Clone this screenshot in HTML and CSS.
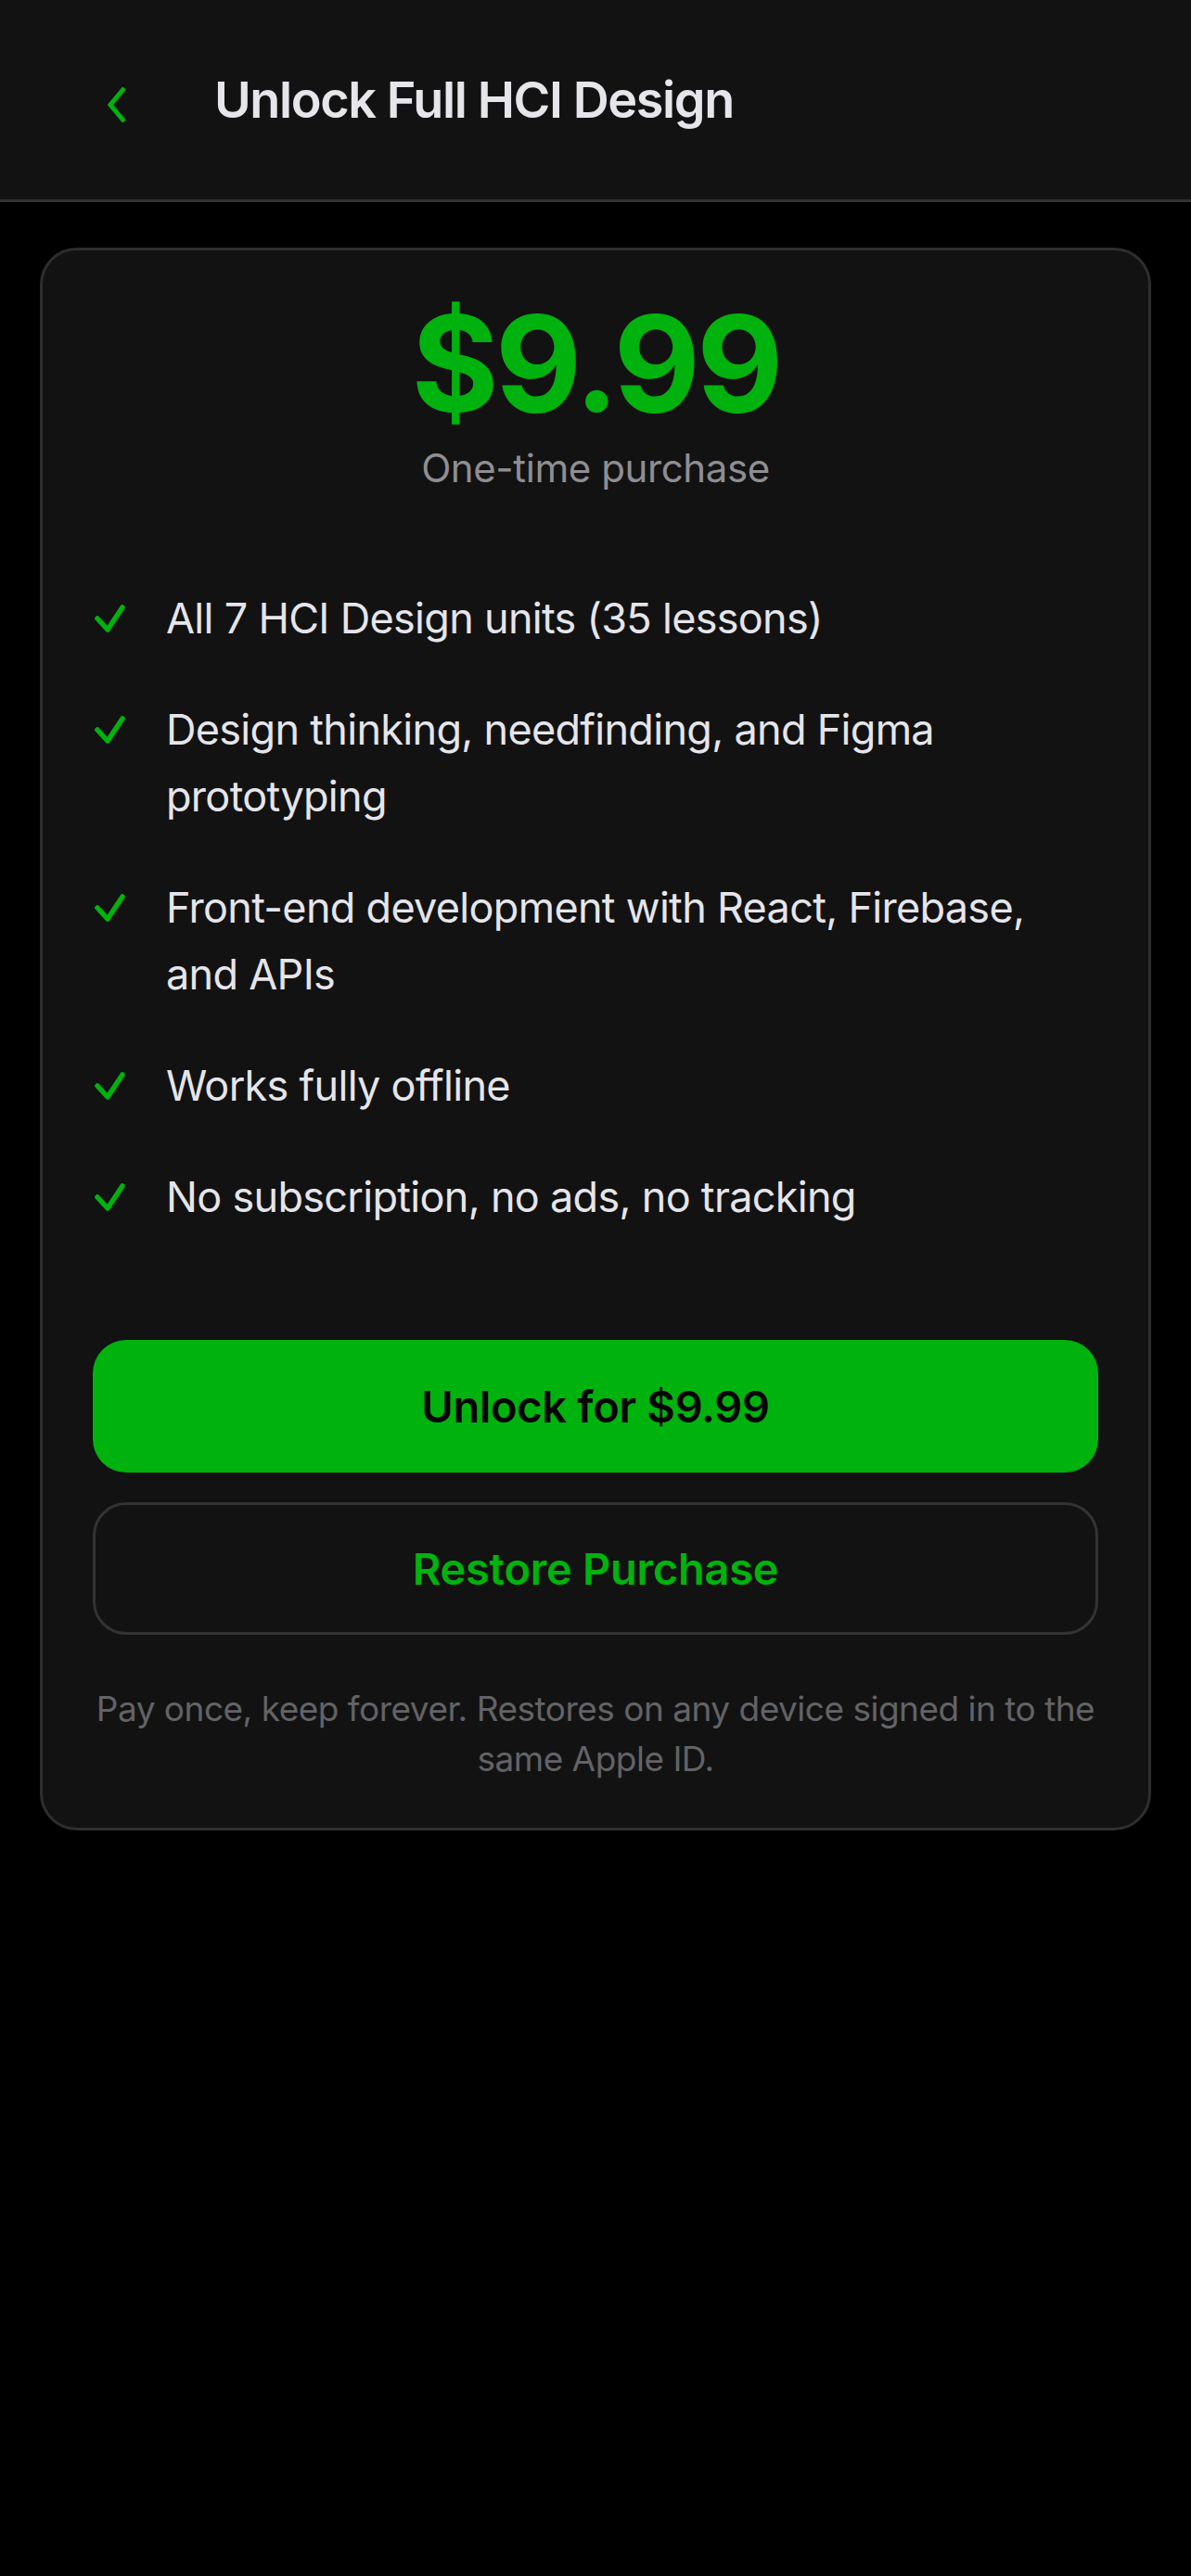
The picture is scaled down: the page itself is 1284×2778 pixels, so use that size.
FILE: index.html
```html
<!DOCTYPE html>
<html lang="en">
<head>
    <meta charset="UTF-8">
    <meta name="viewport" content="width=device-width, initial-scale=1.0">
    <title>Unlock Full HCI Design</title>
    <link rel="stylesheet" href="styles.css">
</head>
<body>
    <header class="top-bar">
        <button class="back-btn" aria-label="Back">
            <svg width="22" height="42" viewBox="0 0 22 42">
                <polyline points="19,3 4,21 19,39" fill="none" stroke="#00b20d" stroke-width="5"/>
            </svg>
        </button>
        <h1 class="top-title">Unlock Full HCI Design</h1>
    </header>

    <main class="page">
        <section class="card">
            <div class="price">$9.99</div>
            <p class="price-note">One-time purchase</p>

            <ul class="features">
                <li>
                    <svg class="check" width="35" height="32" viewBox="0 0 35 32"><polyline points="4,16 15,28 31,4" fill="none" stroke="#00b20d" stroke-width="5.5" stroke-linecap="round" stroke-linejoin="round"/></svg>
                    <span>All 7 HCI Design units (35 lessons)</span>
                </li>
                <li>
                    <svg class="check" width="35" height="32" viewBox="0 0 35 32"><polyline points="4,16 15,28 31,4" fill="none" stroke="#00b20d" stroke-width="5.5" stroke-linecap="round" stroke-linejoin="round"/></svg>
                    <span>Design thinking, needfinding, and Figma prototyping</span>
                </li>
                <li>
                    <svg class="check" width="35" height="32" viewBox="0 0 35 32"><polyline points="4,16 15,28 31,4" fill="none" stroke="#00b20d" stroke-width="5.5" stroke-linecap="round" stroke-linejoin="round"/></svg>
                    <span>Front-end development with React, Firebase, and APIs</span>
                </li>
                <li>
                    <svg class="check" width="35" height="32" viewBox="0 0 35 32"><polyline points="4,16 15,28 31,4" fill="none" stroke="#00b20d" stroke-width="5.5" stroke-linecap="round" stroke-linejoin="round"/></svg>
                    <span>Works fully offline</span>
                </li>
                <li>
                    <svg class="check" width="35" height="32" viewBox="0 0 35 32"><polyline points="4,16 15,28 31,4" fill="none" stroke="#00b20d" stroke-width="5.5" stroke-linecap="round" stroke-linejoin="round"/></svg>
                    <span>No subscription, no ads, no tracking</span>
                </li>
            </ul>

            <button class="btn btn-unlock">Unlock for $9.99</button>
            <button class="btn btn-restore">Restore Purchase</button>

            <p class="fine-print">Pay once, keep forever. Restores on any device signed in to the same Apple ID.</p>
        </section>
    </main>
</body>
</html>
```

FILE: styles.css
```css
* {
    box-sizing: border-box;
}

body {
    margin: 0;
    padding: 0;
    background-color: #000;
    font-family: 'Inter', 'Noto Sans', sans-serif;
    color: #e5e5ea;
}

.top-bar {
    height: 218px;
    display: flex;
    align-items: center;
    padding-left: 115px;
    background-color: #121212;
    border-bottom: 3px solid #333;
}

.back-btn {
    width: 116px;
    padding: 10px 0 0 0;
    border: none;
    background: none;
    display: flex;
    cursor: pointer;
}

.top-title {
    margin: 0;
    font-size: 54px;
    font-weight: 600;
    letter-spacing: -1.4px;
    color: #e5e5ea;
}

.page {
    padding: 49px 43px;
}

.card {
    background-color: #121212;
    border: 3px solid #2e2e2e;
    border-radius: 40px;
    padding: 50px 54px 47px;
}

.price {
    text-align: center;
    font-size: 144px;
    font-weight: 700;
    line-height: 1;
    letter-spacing: -4px;
    color: #00b20d;
}

.price-note {
    margin: 12px 0 0;
    text-align: center;
    font-size: 42px;
    line-height: 1.4;
    letter-spacing: -0.4px;
    color: #8e8e93;
}

.features {
    list-style: none;
    margin: 96px 0 118px;
    padding: 0;
}

.features li {
    display: flex;
    align-items: flex-start;
    font-size: 45px;
    line-height: 72px;
    letter-spacing: -0.7px;
    color: #e5e5ea;
    margin-bottom: 48px;
}

.features li:last-child {
    margin-bottom: 0;
}

.check {
    flex-shrink: 0;
    margin: 20px 43px 0 1px;
}

.btn {
    display: block;
    width: 100%;
    height: 143px;
    border-radius: 36px;
    font-family: inherit;
    font-size: 47px;
    font-weight: 600;
    letter-spacing: -0.3px;
    cursor: pointer;
}

.btn-unlock {
    border: none;
    background-color: #00b20d;
    color: #050505;
}

.btn-restore {
    margin-top: 32px;
    border: 3px solid #333;
    background-color: #121212;
    color: #00b20d;
}

.fine-print {
    margin: 53px -10px 0;
    text-align: center;
    font-size: 37px;
    line-height: 54px;
    letter-spacing: -0.5px;
    color: #636366;
}
```
